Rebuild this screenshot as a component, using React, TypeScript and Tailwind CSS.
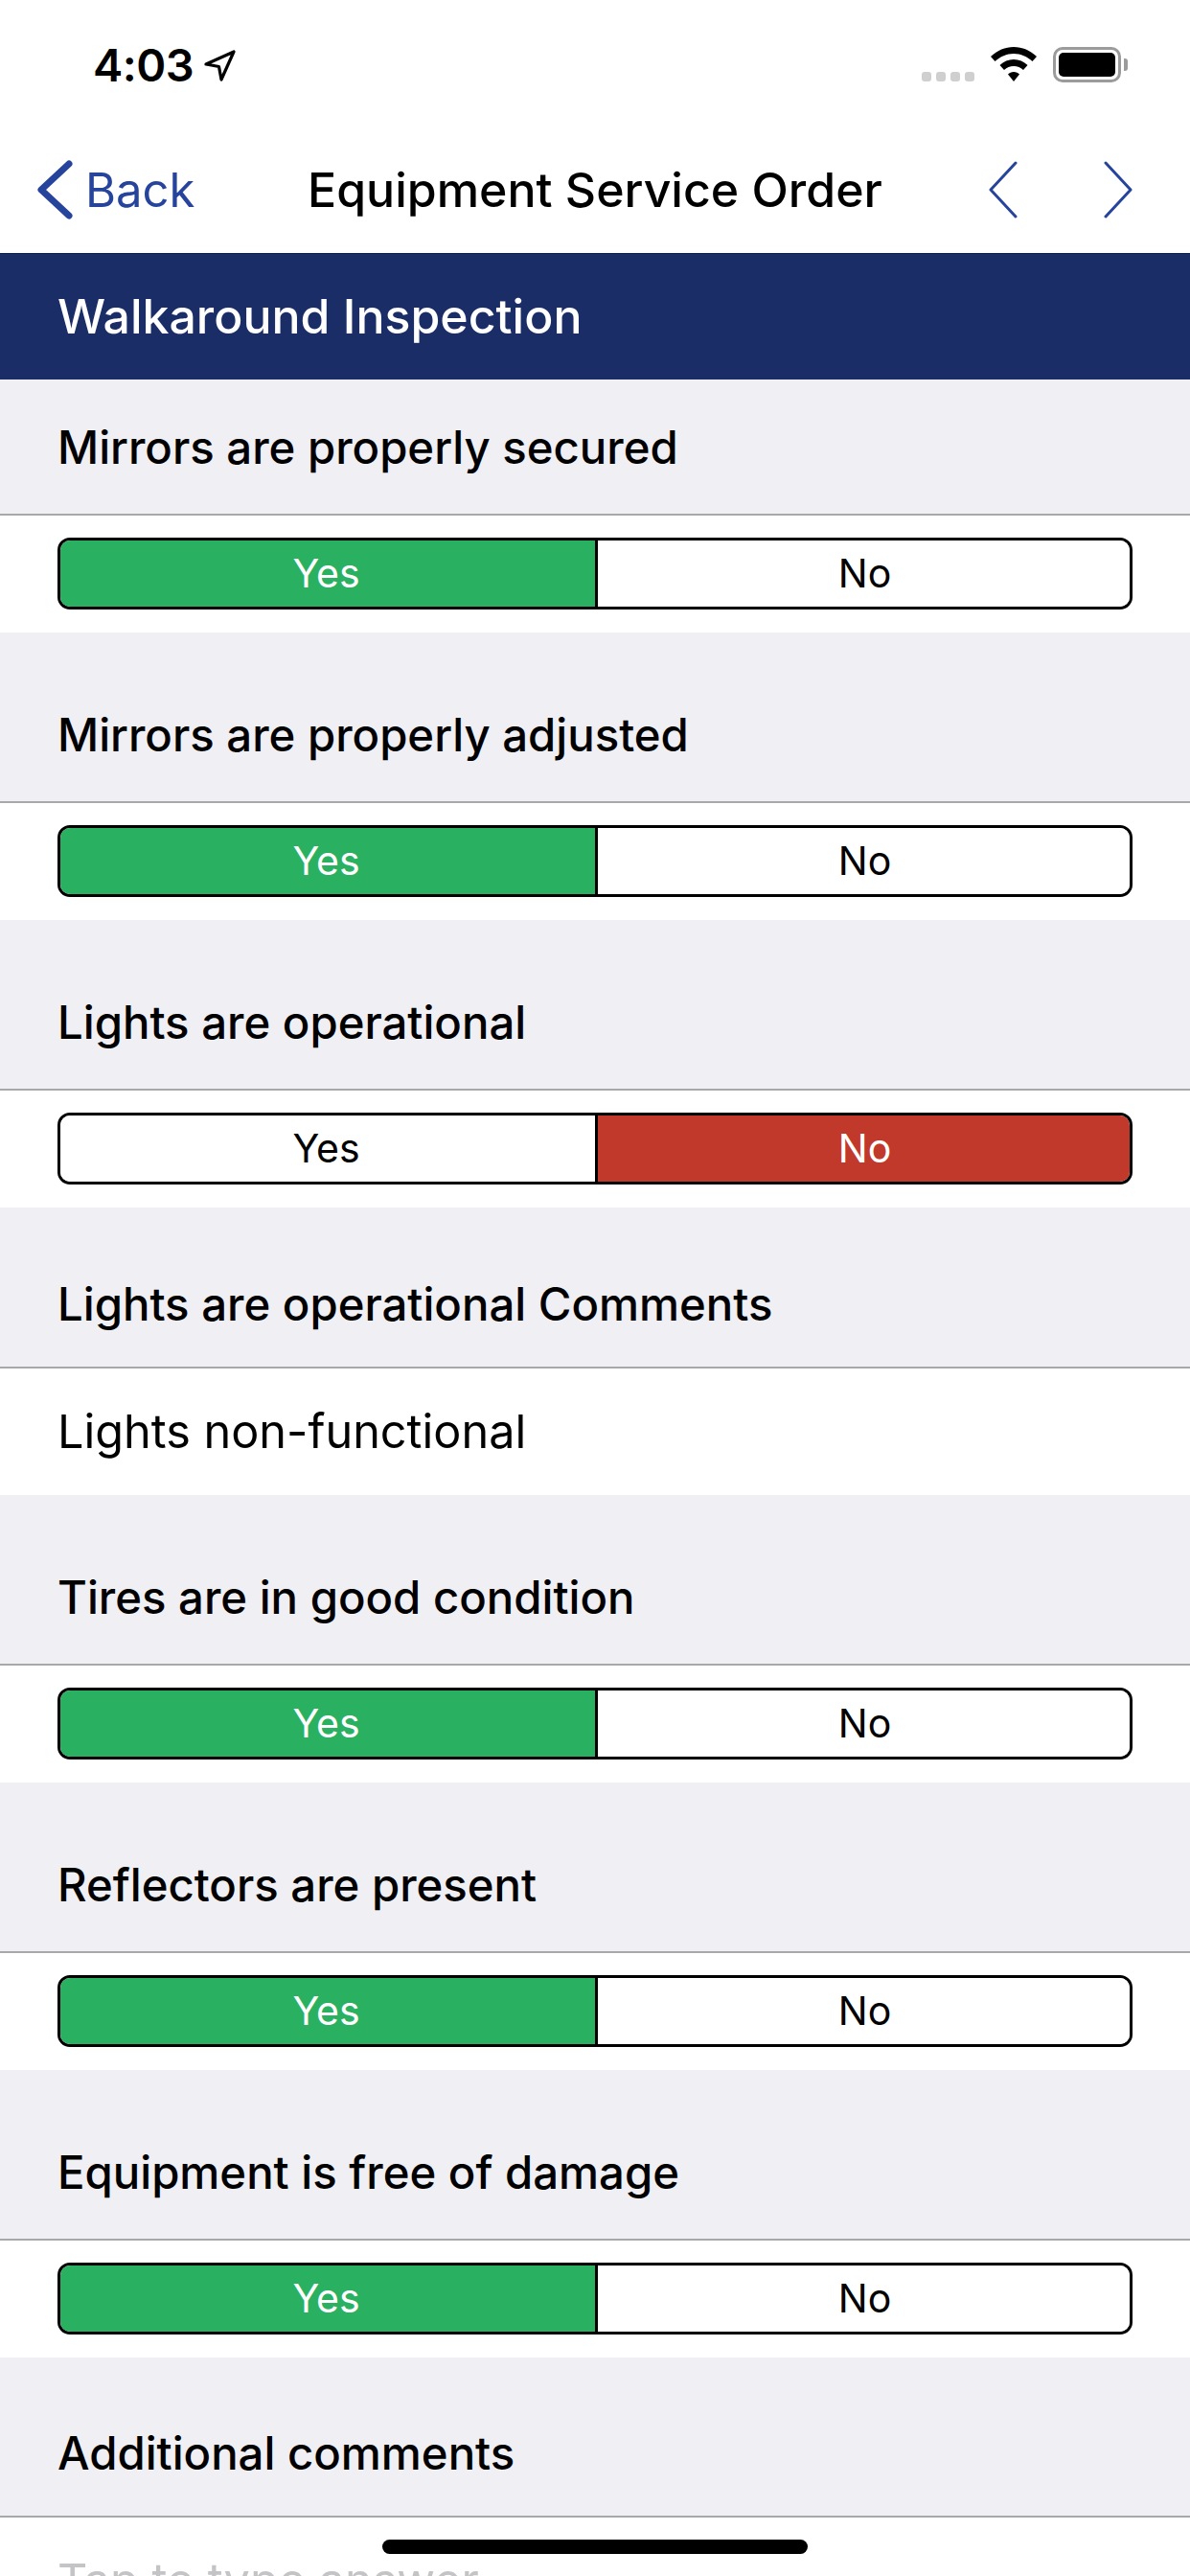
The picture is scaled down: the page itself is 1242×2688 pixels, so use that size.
const font = { fontFamily: "Inter, 'Liberation Sans', sans-serif" };

function StatusBar() {
  return (
    <div className="flex h-[132px] items-start justify-between pl-[97px] pr-[65px] pt-[42px]">
      <div className="flex items-center gap-[11px]">
        <span className="text-[47px] leading-[52px] font-semibold text-black tracking-[-0.5px]">4:03</span>
        <svg width="33" height="33" viewBox="0 0 33 33" fill="none">
          <path d="M2 15 L31 2 L18 31 L15.5 17.5 Z" stroke="#000" strokeWidth="3.2" strokeLinejoin="round" />
        </svg>
      </div>
      <div className="flex items-end gap-[17px] pt-[7px]">
        <div className="mb-[1px] flex gap-[5px]">
          <div className="h-[10px] w-[10px] rounded-[3px] bg-[#cfcfcf]" />
          <div className="h-[10px] w-[10px] rounded-[3px] bg-[#cfcfcf]" />
          <div className="h-[10px] w-[10px] rounded-[3px] bg-[#cfcfcf]" />
          <div className="h-[10px] w-[10px] rounded-[3px] bg-[#cfcfcf]" />
        </div>
        <svg width="48" height="37" viewBox="0 0 48 37" fill="#000">
          <path d="M24 0 C33 0 41 3.500 48 10 L43.500 15 C38 10 31.500 7 24 7 C16.500 7 10 10 4.500 15 L0 10 C7 3.500 15 0 24 0 Z" />
          <path d="M24 13 C29.500 13 34.500 15 38.500 19 L34 24 C31 21.500 28 20 24 20 C20 20 17 21.500 14 24 L9.500 19 C13.500 15 18.500 13 24 13 Z" />
          <path d="M24 26 C26.500 26 28.500 27 30 28.500 L24 36 L18 28.500 C19.500 27 21.500 26 24 26 Z" />
        </svg>
        <div className="flex items-center">
          <div className="flex h-[37px] w-[71px] items-center justify-center rounded-[10px] border-[3px] border-[#9b9b9b] bg-white">
            <div className="h-[25px] w-[59px] rounded-[5px] bg-black" />
          </div>
          <div className="ml-[3px] h-[13px] w-[4px] rounded-r-[3px] bg-[#9b9b9b]" />
        </div>
      </div>
    </div>
  );
}

function NavBar() {
  return (
    <div className="relative flex h-[132px] items-center justify-between pl-[39px] pr-[60px]">
      <div className="flex items-center gap-[13px]">
        <svg width="37" height="62" viewBox="0 0 37 62" fill="none">
          <path d="M33 4 L4 31 L33 58" stroke="#26449c" strokeWidth="7" strokeLinecap="round" strokeLinejoin="round" />
        </svg>
        <span className="text-[49px] leading-none text-[#26449c]">Back</span>
      </div>
      <div className="absolute inset-y-0 left-[321px] flex items-center">
        <span className="text-[50px] leading-none font-medium whitespace-nowrap text-black">Equipment Service Order</span>
      </div>
      <div className="flex items-center gap-[90px]">
        <svg width="30" height="60" viewBox="0 0 30 60" fill="none">
          <path d="M28 2 L2 30 L28 58" stroke="#26449c" strokeWidth="3" strokeLinecap="round" strokeLinejoin="round" />
        </svg>
        <svg width="30" height="60" viewBox="0 0 30 60" fill="none">
          <path d="M2 2 L28 30 L2 58" stroke="#26449c" strokeWidth="3" strokeLinecap="round" strokeLinejoin="round" />
        </svg>
      </div>
    </div>
  );
}

function Heading({ text, className }: { text: string; className: string }) {
  return (
    <div className={`flex ${className} items-end border-b-[2px] border-[#a8a8aa] bg-[#efeff4] pl-[60px]`}>
      <span className="text-[47.3px] leading-[56px] font-medium text-black">{text}</span>
    </div>
  );
}

function YesNo({ value }: { value: "yes" | "no" }) {
  return (
    <div className="bg-white px-[60px] pt-[23px] pb-[24px]">
      <div className="flex h-[75px] overflow-hidden rounded-[13px] border-[3px] border-black text-[41px]">
        <div className={`flex w-[561px] items-center justify-center border-r-[3px] border-black pr-[3px] ${value === "yes" ? "bg-[#2ab061] text-white" : "bg-white text-black"}`}>
          Yes
        </div>
        <div className={`flex flex-1 items-center justify-center pl-[2px] ${value === "no" ? "bg-[#c0392b] text-white" : "bg-white text-black"}`}>
          No
        </div>
      </div>
    </div>
  );
}

function Question({ text, value, first }: { text: string; value: "yes" | "no"; first?: boolean }) {
  return (
    <div>
      <Heading text={text} className={first ? "h-[142px] pb-[41px]" : "h-[178px] pb-[41px]"} />
      <YesNo value={value} />
    </div>
  );
}

export default function App() {
  return (
    <div className="relative h-[2688px] w-[1242px] overflow-hidden bg-white" style={font}>
      <StatusBar />
      <NavBar />
      <div className="flex h-[132px] items-center border-t border-[#10204d] bg-[#1a2d66] pl-[60px]">
        <span className="text-[50px] font-medium text-white">Walkaround Inspection</span>
      </div>
      <Question first text="Mirrors are properly secured" value="yes" />
      <Question text="Mirrors are properly adjusted" value="yes" />
      <Question text="Lights are operational" value="no" />
      <Heading text="Lights are operational Comments" className="h-[168px] pb-[37px]" />
      <div className="flex h-[132px] items-center bg-white pl-[60px] text-[48.6px] text-black">Lights non-functional</div>
      <Question text="Tires are in good condition" value="yes" />
      <Question text="Reflectors are present" value="yes" />
      <Question text="Equipment is free of damage" value="yes" />
      <Heading text="Additional comments" className="h-[167px] pb-[37px]" />
      <div className="bg-white pl-[60px] pt-[36px] text-[48.6px] leading-[60px] text-[#c4c4c6]">Tap to type answer</div>
      <div className="absolute bottom-[23px] left-[399px] h-[15px] w-[444px] rounded-full bg-black" />
    </div>
  );
}
